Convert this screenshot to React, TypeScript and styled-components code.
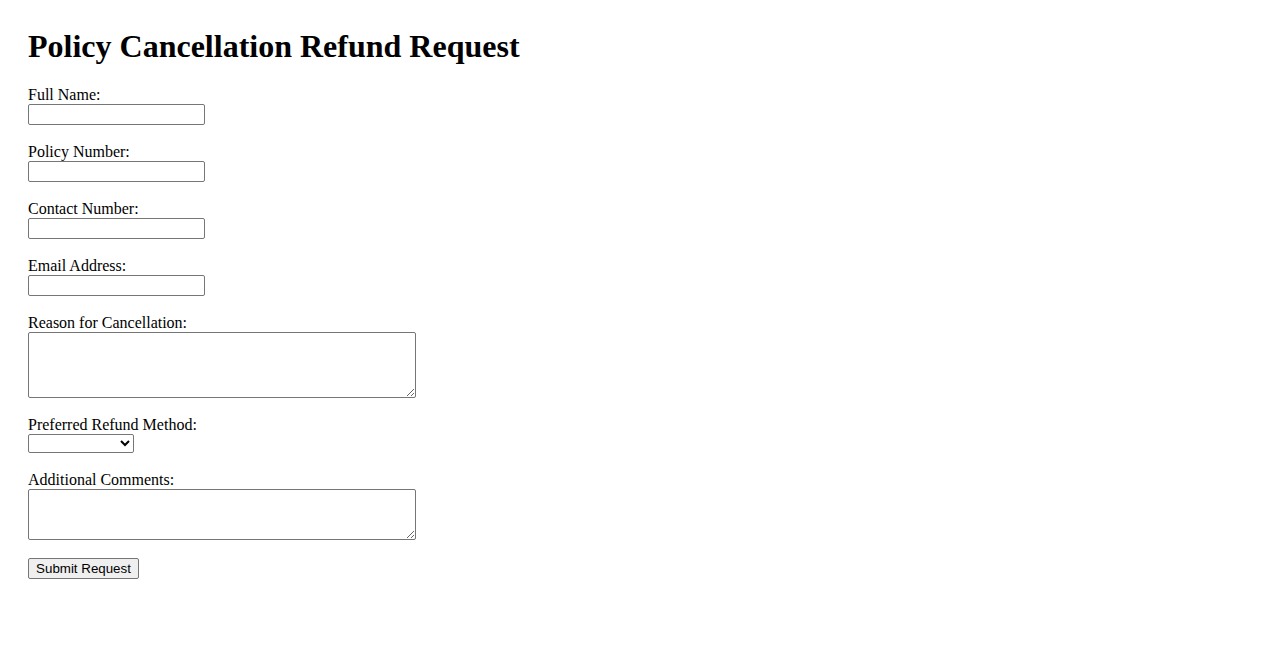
import React from "react";
import styled, {createGlobalStyle} from "styled-components";

const GlobalStyle = createGlobalStyle`
  body {
    margin: 0;
    background: #ffffff;
    color: #000000;
    font-family: "Liberation Serif", "Times New Roman", serif;
  }
`;

const Page = styled.div`
  padding: 28px;
`;

const Title = styled.h1`
  margin: 0 0 21px 0;
  font-size: 32px;
  font-weight: 700;
  line-height: 37px;
`;

const Form = styled.form`
  display: block;
`;

const Field = styled.div`
  margin-bottom: 18px;
`;

const Label = styled.label`
  display: block;
  font-size: 16px;
  line-height: 18px;
`;

const TextInput = styled.input`
  display: block;
  box-sizing: border-box;
  width: 177px;
  height: 21px;
  margin: 0;
  padding: 1px 2px;
  border: 1px solid #767676;
  border-radius: 2px;
  font-family: "Liberation Sans", Arial, sans-serif;
  font-size: 13.33px;
`;

const TextArea = styled.textarea<{$rows: number}>`
  display: block;
  box-sizing: border-box;
  width: 388px;
  height: ${(p) => p.$rows * 15 + 6}px;
  margin: 0;
  padding: 2px;
  border: 1px solid #767676;
  border-radius: 2px;
  font-family: "Liberation Mono", monospace;
  font-size: 13.33px;
`;

const Select = styled.select`
  display: block;
  box-sizing: border-box;
  width: 106px;
  height: 19px;
  margin: 0;
  border: 1px solid #767676;
  border-radius: 2px;
  background: #ffffff;
  font-family: "Liberation Sans", Arial, sans-serif;
  font-size: 13.33px;
`;

const SubmitButton = styled.button`
  display: block;
  box-sizing: border-box;
  width: 111px;
  height: 21px;
  margin: 0;
  padding: 1px 6px;
  border: 1px solid #767676;
  border-radius: 2px;
  background: #efefef;
  color: #000000;
  font-family: "Liberation Sans", Arial, sans-serif;
  font-size: 13.33px;
`;

const fields = [
  {id: "fullName", label: "Full Name:", type: "text"},
  {id: "policyNumber", label: "Policy Number:", type: "text"},
  {id: "contactNumber", label: "Contact Number:", type: "tel"},
  {id: "email", label: "Email Address:", type: "email"},
];

const App: React.FC = () => {
  return (
    <Page>
      <GlobalStyle />
      <Title>Policy Cancellation Refund Request</Title>
      <Form onSubmit={(e) => e.preventDefault()}>
        {fields.map((f) => (
          <Field key={f.id}>
            <Label htmlFor={f.id}>{f.label}</Label>
            <TextInput id={f.id} type={f.type} />
          </Field>
        ))}
        <Field>
          <Label htmlFor="reason">Reason for Cancellation:</Label>
          <TextArea id="reason" $rows={4} />
        </Field>
        <Field>
          <Label htmlFor="refundMethod">Preferred Refund Method:</Label>
          <Select id="refundMethod" defaultValue="">
            <option value=""></option>
            <option value="bank">Bank Transfer</option>
            <option value="check">Check</option>
            <option value="card">Credit Card</option>
          </Select>
        </Field>
        <Field>
          <Label htmlFor="comments">Additional Comments:</Label>
          <TextArea id="comments" $rows={3} />
        </Field>
        <SubmitButton type="submit">Submit Request</SubmitButton>
      </Form>
    </Page>
  );
};

export default App;
